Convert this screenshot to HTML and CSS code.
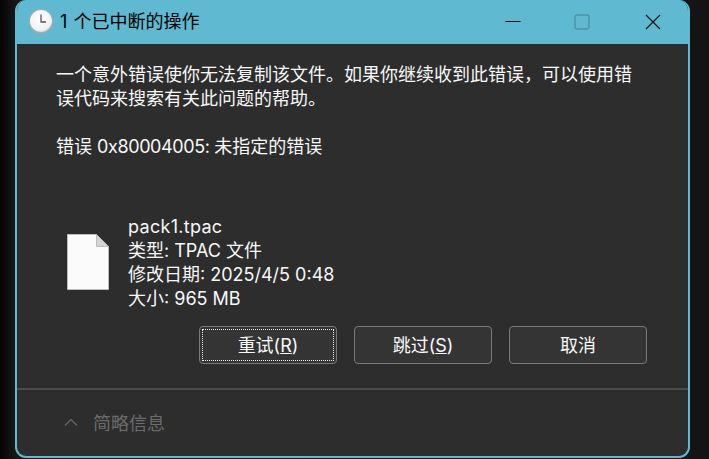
FILE: index.html
```html
<!DOCTYPE html>
<html lang="zh-CN">
<head>
<meta charset="utf-8">
<title>1 个已中断的操作</title>
<link rel="stylesheet" href="styles.css">
</head>
<body>
<div class="window">
  <header class="titlebar">
    <svg class="clock" width="26" height="26" viewBox="0 0 26 26">
      <defs>
        <radialGradient id="face" cx="0.45" cy="0.4" r="0.7">
          <stop offset="0" stop-color="#ffffff"/>
          <stop offset="0.7" stop-color="#f1f1f1"/>
          <stop offset="1" stop-color="#bdbdbd"/>
        </radialGradient>
      </defs>
      <circle cx="13" cy="13" r="11.6" fill="url(#face)" stroke="#a9a9a9" stroke-width="1.2"/>
      <path d="M13 6.5V14H18" fill="none" stroke="#555" stroke-width="1.3"/>
    </svg>
    <span class="title">1 个已中断的操作</span>
    <div class="controls">
      <svg class="ctl" width="16" height="16" viewBox="0 0 16 16"><path d="M0.5 7.5H15.5" stroke="#000" stroke-width="1"/></svg>
      <svg class="ctl" width="16" height="16" viewBox="0 0 16 16"><rect x="1" y="1" width="14" height="14" rx="2" fill="none" stroke="#4a94a8" stroke-width="1.4"/></svg>
      <svg class="ctl" width="16" height="16" viewBox="0 0 16 16"><path d="M1 1L15 15M15 1L1 15" stroke="#111" stroke-width="1.2"/></svg>
    </div>
  </header>
  <main class="body">
    <p class="message">一个意外错误使你无法复制该文件。如果你继续收到此错误，可以使用错误代码来搜索有关此问题的帮助。</p>
    <p class="code">错误 <span class="hex">0x80004005: </span>未指定的错误</p>
    <div class="file">
      <svg class="fileicon" width="42" height="56" viewBox="0 0 42 56">
        <path d="M0.5 0.5H29.5L41.5 12.5V55.5H0.5Z" fill="#fbfbfb" stroke="#bdbdbd"/>
        <path d="M29.5 0.5V12.5H41.5Z" fill="#d4d4d4" stroke="#bdbdbd"/>
      </svg>
      <div class="fileinfo">
        <div class="name">pack1.tpac</div>
        <div>类型: TPAC 文件</div>
        <div>修改日期: 2025/4/5 0:48</div>
        <div>大小: 965 MB</div>
      </div>
    </div>
    <div class="actions">
      <button class="btn focus"><span class="inner">重试(<u>R</u>)</span></button>
      <button class="btn"><span class="inner">跳过(<u>S</u>)</span></button>
      <button class="btn"><span class="inner">取消</span></button>
    </div>
  </main>
  <footer class="footer">
    <svg class="chev" width="14" height="8" viewBox="0 0 14 8"><path d="M1 7.5L7 1.5L13 7.5" fill="none" stroke="#6a6a6a" stroke-width="1.1"/></svg>
    <span class="toggle">简略信息</span>
  </footer>
</div>
</body>
</html>
```

FILE: styles.css
```css
* { box-sizing: border-box; }
html, body { margin: 0; height: 100%; }
body {
  width: 709px;
  height: 459px;
  overflow: hidden;
  background: linear-gradient(90deg, #050505 0, #171717 15px, #141414 100%);
  font-family: "Inter", "Noto Sans CJK SC", sans-serif;
  font-size: 18px;
  line-height: 24px;
  color: #f8f8f8;
}
.window {
  margin-left: 15px;
  width: 675px;
  height: 458px;
  background: #2d2d2d;
  border: 2px solid #5fb9d0;
  border-top: 0;
  border-radius: 11px;
  display: flex;
  flex-direction: column;
  overflow: hidden;
}
.titlebar {
  height: 44px;
  flex: none;
  background: #5fb9d0;
  display: flex;
  align-items: center;
  padding-left: 11px;
  color: #000;
}
.clock { margin-right: 6px; margin-top: -3px; }
.title { word-spacing: 1px; }
.controls {
  margin-left: auto;
  display: flex;
  padding-right: 27px;
  margin-top: -1px;
}
.ctl { display: block; margin-left: 55px; }
.ctl:nth-child(2) { margin-left: 53px; }
.body {
  flex: 1;
  padding: 19px 41px 0 39px;
  display: flex;
  flex-direction: column;
}
.message { margin: 0; }
.code { margin: 24px 0 0; }
.hex { letter-spacing: -0.4px; }
.file {
  margin-top: 56px;
  display: flex;
  align-items: center;
  gap: 19px;
  padding-left: 11px;
}
.fileicon { flex: none; margin-top: -2px; }
.name { letter-spacing: 0.3px; }
.actions {
  margin-top: 15px;
  display: flex;
  justify-content: flex-end;
  gap: 17px;
}
.btn {
  width: 138px;
  height: 38px;
  padding: 2px;
  background: #343434;
  border: 1px solid #7a7a7a;
  border-radius: 4px;
  font: inherit;
  color: #f8f8f8;
  display: block;
}
.inner {
  display: flex;
  align-items: center;
  justify-content: center;
  height: 100%;
  padding-top: 2px;
  border: 1px dotted transparent;
}
.focus .inner { border-color: #f0f0f0; }
.footer {
  height: 68px;
  flex: none;
  margin-top: auto;
  border-top: 2px solid #4b4b4b;
  display: flex;
  align-items: center;
  padding-left: 47px;
  gap: 15px;
  color: #6b6b6b;
}
.toggle { padding-top: 2px; }
.chev { flex: none; margin-top: -3px; }
```
